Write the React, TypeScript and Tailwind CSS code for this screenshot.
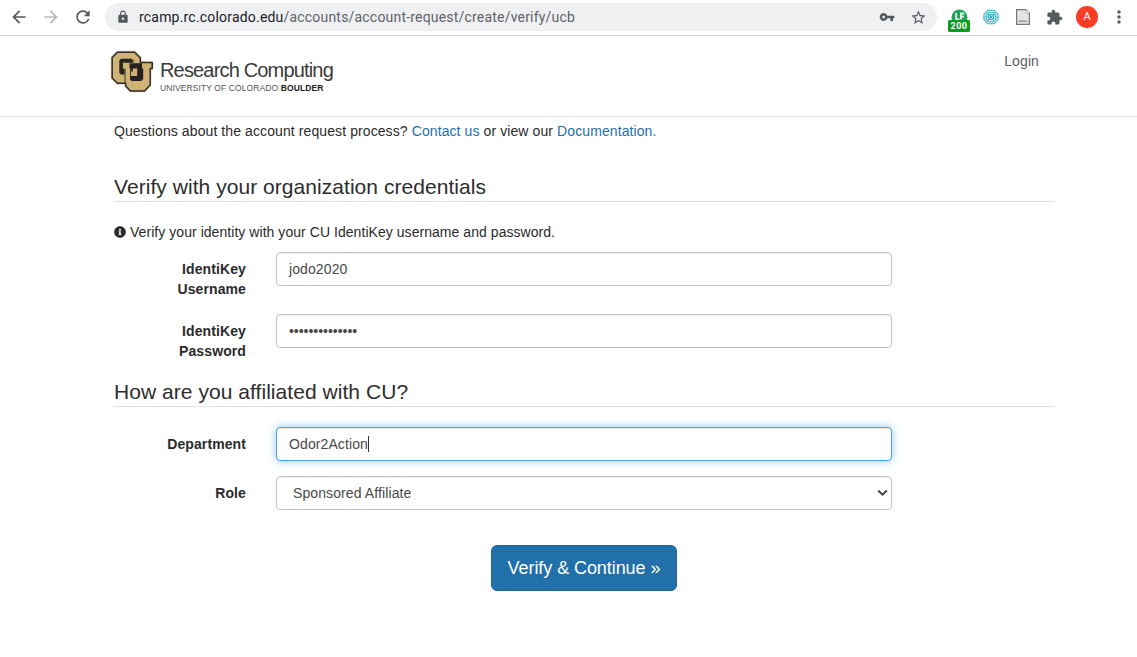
import React from "react";
import {
  MdArrowBack,
  MdArrowForward,
  MdRefresh,
  MdLock,
  MdVpnKey,
  MdStarBorder,
  MdExtension,
  MdMoreVert,
} from "react-icons/md";
import { FaInfoCircle } from "react-icons/fa";

function BadgeExtension() {
  return (
    <div className="relative ml-[20px] h-[23px] w-[22px] shrink-0">
      <svg className="absolute left-[3px] top-0" width="17" height="17" viewBox="0 0 17 17">
        <circle cx="8.5" cy="8.5" r="8" fill="#1fa45b" />
        <path d="M5.200 4V10.500H8.500M13.500 4.500H10V10.500M10 7.600H13" stroke="#e6f6ec" strokeWidth="1.800" fill="none" />
      </svg>
      <div className="absolute bottom-0 left-0 h-[12px] w-[22px] rounded-[1.5px] bg-[#0a9e1f] text-center text-[9px] font-bold leading-[13px] tracking-[0.5px] text-white">
        200
      </div>
    </div>
  );
}

function WebExtension() {
  return (
    <svg className="ml-[13px] shrink-0" width="16" height="16" viewBox="0 0 16 16" fill="none" stroke="#25b0c6">
      <path d="M5 1.200H11L15 5.500V10.500L11 14.800H5L1 10.500V5.500Z" strokeWidth="1.100" />
      <path d="M6 3.300H10L12.800 6V10L10 12.700H6L3.200 10V6Z" strokeWidth="1.100" />
      <circle cx="8" cy="8" r="2.600" strokeWidth="1.100" />
      <path d="M0 8H16M3 2L13 14M13 2L3 14" strokeWidth=".5" />
      <circle cx="8" cy="8" r="1" fill="#25b0c6" />
    </svg>
  );
}

function PageExtension() {
  return (
    <svg className="ml-[17px] shrink-0" width="14" height="16" viewBox="0 0 14 16">
      <path d="M.6.6H10L13.400 4V15.400H.6Z" fill="#e4e4e4" stroke="#777" strokeWidth="1.200" />
      <path d="M10 .6V4H13.400" fill="#fff" stroke="#aaa" strokeWidth=".8" />
      <rect x="2.500" y="11.500" width="9" height="1.500" fill="#999" />
    </svg>
  );
}

function BrowserBar() {
  return (
    <div className="flex h-[36px] items-start border-b border-[#d5d6d8] bg-white font-['Roboto',sans-serif]">
      <div className="flex h-[34px] w-[105px] items-center pl-[9px] text-[#55595e]">
        <MdArrowBack size={20} />
        <MdArrowForward size={20} className="ml-[12px] text-[#b6b8ba]" />
        <MdRefresh size={20} className="ml-[12px]" />
      </div>
      <div className="mt-[3px] flex h-[28px] w-[832px] items-center rounded-full bg-[#eff0f2] pl-[11px] pr-[10px]">
        <MdLock size={14} className="text-[#55595e]" />
        <div className="ml-[9px] flex-1 whitespace-nowrap text-[14px] tracking-[0.195px] text-[#5f6368]">
          <span className="text-[#202124]">rcamp.rc.colorado.edu</span>/accounts/account-request/create/verify/ucb
        </div>
        <MdVpnKey size={16} className="mr-[15px] text-[#55595e]" />
        <MdStarBorder size={17} className="text-[#55595e]" />
      </div>
      <div className="flex h-[34px] flex-1 items-center">
        <div className="-ml-[9px] mt-[6px]">
          <BadgeExtension />
        </div>
        <WebExtension />
        <PageExtension />
        <MdExtension size={17} className="ml-[16px] shrink-0 text-[#55595e]" />
        <div className="ml-[13px] flex h-[22px] w-[22px] shrink-0 items-center justify-center rounded-full bg-[#fb3d25] text-[11px] text-white">
          A
        </div>
        <MdMoreVert size={20} className="ml-[11px] shrink-0 text-[#55595e]" />
      </div>
    </div>
  );
}

function CULogo() {
  return (
    <svg width="44" height="43" viewBox="0 0 44 43">
      <path d="M7 .8H25L31.500 7V11.500H43.300V19.500H41.300V35.500L35 42.200H20L14.500 36.500V34.500H7L.8 28.500V7Z" fill="#d6c294" />
      <path d="M7.500 2.300H24.500L30.300 8V12.600H42.200V18.400H40.200V35L34.500 41H20.500L15.700 36V33.200H7.500L2.200 28V7.500Z" fill="#cfb376" stroke="#302e2c" strokeWidth="1.500" strokeLinejoin="round" />
      <path d="M11 8.800H21.500L23.300 10.500V12.800H12.900V18.800H14.600V24.600H11L9.300 23V10.500Z" fill="#25221f" />
      <path d="M19.500 13.300H32V18.400H33.200V29L31.200 31H21.500L20 29.500V26H27.200V18.400H22.800V21.500H21V18.400H19.500Z" fill="#25221f" />
      <path d="M15 18.800V33.200" stroke="#302e2c" strokeWidth=".9" />
      <path d="M20.500 18.400V29.500" stroke="#302e2c" strokeWidth=".9" />
      <path d="M24.200 8.800V13" stroke="#8d7b54" strokeWidth=".7" />
    </svg>
  );
}

function SiteHeader() {
  return (
    <header className="flex h-[81px] items-start border-b border-[#e0e0e0] pl-[110px] pr-[98px]">
      <div className="mt-[14px] flex">
        <CULogo />
        <div className="ml-[6px] pt-[8px] text-[#3b3b3b]">
          <div className="w-[180px] whitespace-nowrap text-[20px] leading-[24px] tracking-[-0.830px]">Research Computing</div>
          <div className="mt-[1px] whitespace-nowrap text-[8.500px] leading-[10px] tracking-[0.100px] text-[#555]">
            UNIVERSITY OF COLORADO <b className="text-[#222]">BOULDER</b>
          </div>
        </div>
      </div>
      <a className="ml-auto mt-[15px] text-[14px] leading-[20px] tracking-[0.100px] text-[#5e5e5e]">Login</a>
    </header>
  );
}

function SectionTitle({ children }: { children: React.ReactNode }) {
  return (
    <h2 className="h-[31px] border-b border-[#e3e3e3] text-[21px] leading-[31px] tracking-[0.050px] text-[#2d2d2d]">
      {children}
    </h2>
  );
}

function Field({ label, children }: { label: React.ReactNode; children: React.ReactNode }) {
  return (
    <div className="flex items-start">
      <label className="w-[132px] pt-[7px] text-right font-bold leading-[20px] tracking-[0.100px]">{label}</label>
      <div className="ml-[30px] w-[616px]">{children}</div>
    </div>
  );
}

const box =
  "flex h-[34px] items-center rounded-[4px] border border-[#c2c2c2] bg-white pl-[12px] text-[14px] tracking-[0.100px] text-[#484848] shadow-[inset_0_1px_1px_rgba(0,0,0,0.075)]";

export default function App() {
  return (
    <div className="h-[657px] w-[1137px] overflow-hidden bg-white font-['Liberation_Sans',Arial,sans-serif] text-[14px] leading-[20px] text-[#2b2b2b]">
      <BrowserBar />
      <SiteHeader />
      <main className="ml-[114px] w-[940px] pt-[4px]">
        <p className="tracking-[0.095px]">
          Questions about the account request process? <a className="text-[#1f6fac]">Contact us</a> or view our{" "}
          <a className="text-[#1f6fac]">Documentation.</a>
        </p>
        <div className="mt-[30px]">
          <SectionTitle>Verify with your organization credentials</SectionTitle>
        </div>
        <p className="mt-[20px] flex items-center tracking-[0.050px]">
          <FaInfoCircle size={12} className="mr-[4px]" />
          Verify your identity with your CU IdentiKey username and password.
        </p>
        <div className="mt-[10px] h-[62px]">
          <Field label={<>IdentiKey<br />Username</>}>
            <div className={box}>jodo2020</div>
          </Field>
        </div>
        <div className="h-[62px]">
          <Field label={<>IdentiKey<br />Password</>}>
            <div className={box}>
              <span className="tracking-[-0.030px]">••••••••••••••</span>
            </div>
          </Field>
        </div>
        <SectionTitle>How are you affiliated with CU?</SectionTitle>
        <div className="mt-[20px]">
          <Field label="Department">
            <div className="flex h-[34px] items-center rounded-[4px] border border-[#4ca3dd] bg-white pl-[12px] text-[14px] tracking-[0.100px] text-[#484848] shadow-[inset_0_1px_1px_rgba(0,0,0,0.075),0_0_8px_rgba(76,163,221,0.6)]">
              Odor2Action
              <span className="h-[16px] w-px bg-[#333]" />
            </div>
          </Field>
        </div>
        <div className="mt-[15px]">
          <Field label="Role">
            <div className={box}>
              <span className="ml-[4px] flex-1">Sponsored Affiliate</span>
              <svg className="mr-[3px]" width="11" height="8" viewBox="0 0 11 8">
                <path d="M1.200 1.500L5.500 5.700L9.800 1.500" fill="none" stroke="#444" strokeWidth="2" />
              </svg>
            </div>
          </Field>
        </div>
        <div className="mt-[35px] flex justify-center">
          <button className="h-[46px] w-[186px] rounded-[6px] border border-[#1d659c] bg-[#2170aa] text-[18px] tracking-[-0.070px] text-white">
            Verify &amp; Continue »
          </button>
        </div>
      </main>
    </div>
  );
}
